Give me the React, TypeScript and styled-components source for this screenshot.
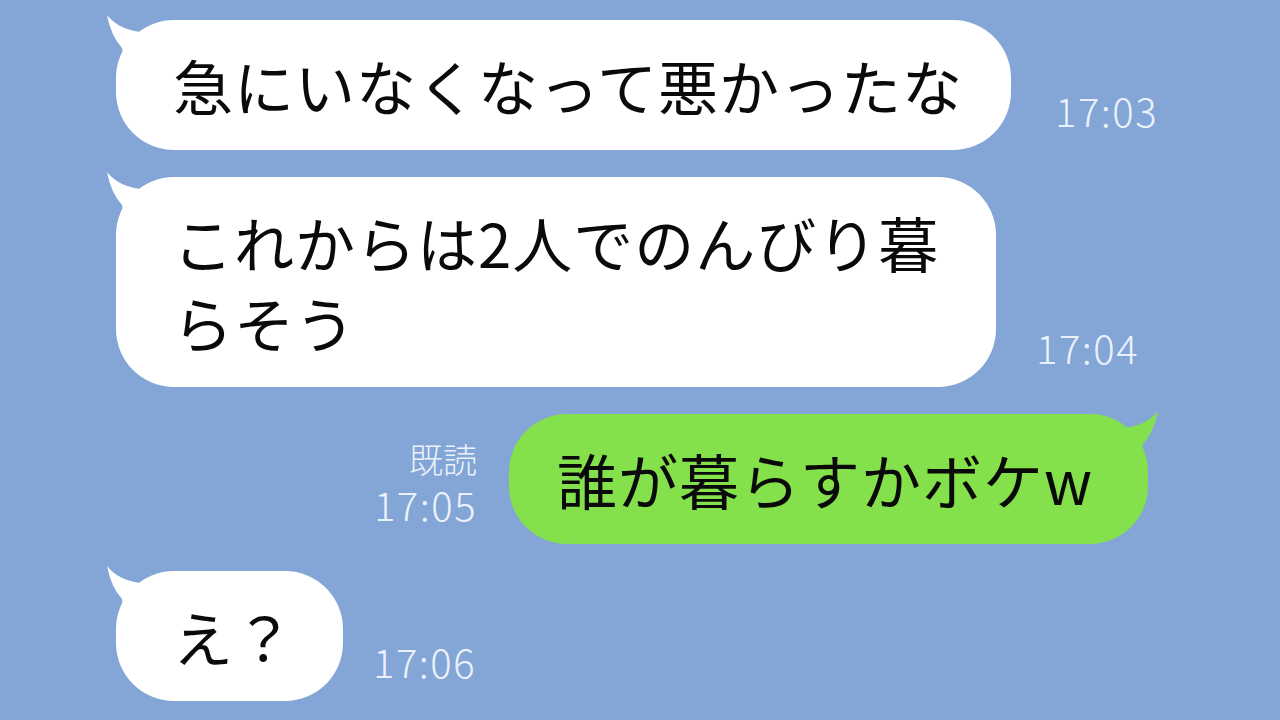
import React from "react";
import styled, { createGlobalStyle } from "styled-components";

const GlobalStyle = createGlobalStyle`
  html, body {
    margin: 0;
    padding: 0;
    background: #83a6d7;
    overflow: hidden;
  }
  body {
    font-family: "Noto Sans CJK JP", "Noto Sans", sans-serif;
  }
`;

const Screen = styled.div`
  width: 1280px;
  height: 720px;
  box-sizing: border-box;
  background: #83a6d7;
  padding: 20px 132px 0 116px;
  display: flex;
  flex-direction: column;
  gap: 27px;
  overflow: hidden;
`;

const Row = styled.div<{ $out?: boolean; $gap: number }>`
  display: flex;
  align-items: flex-end;
  justify-content: ${(p) => (p.$out ? "flex-end" : "flex-start")};
  gap: ${(p) => p.$gap}px;
`;

const Bubble = styled.div<{ $out?: boolean; $maxWidth?: number }>`
  position: relative;
  flex-shrink: 0;
  box-sizing: border-box;
  background: ${(p) => (p.$out ? "#84e04b" : "#ffffff")};
  color: #0a0a0a;
  font-size: 60px;
  line-height: 80px;
  letter-spacing: 1px;
  padding: ${(p) => (p.$out ? "25px 55px 25px 48px" : "25px 48px 25px 57px")};
  border-radius: 58px;
  max-width: ${(p) => (p.$maxWidth ? `${p.$maxWidth}px` : "none")};
  white-space: pre-wrap;
`;

const Tail = styled.svg<{ $out?: boolean }>`
  position: absolute;
  top: -8px;
  width: 60px;
  height: 60px;
  ${(p) =>
    p.$out
      ? "right: -13px; top: -6px; transform: scaleX(-1);"
      : "left: -12px;"}
`;

const Meta = styled.div<{ $out?: boolean }>`
  display: flex;
  flex-shrink: 0;
  flex-direction: column;
  align-items: ${(p) => (p.$out ? "flex-end" : "flex-start")};
  margin-bottom: 17px;
  color: rgba(250, 252, 255, 0.9);
  font-family: "Noto Sans CJK JP", sans-serif;
  font-weight: 300;
`;

const Read = styled.span`
  font-size: 34px;
  line-height: 44px;
`;

const Time = styled.span`
  font-size: 40px;
  line-height: 46px;
  letter-spacing: 1.5px;
`;

function BubbleTail({ out, color }: { out?: boolean; color: string }) {
  return (
    <Tail $out={out} viewBox="0 0 60 60">
      <path
        d="M3 3 Q14 17 36 20 L58 28 L58 58 L22 58 L18 36 Q7 24 3 3 Z"
        fill={color}
      />
    </Tail>
  );
}

type Msg = {
  out?: boolean;
  text: string;
  time: string;
  read?: boolean;
  maxWidth?: number;
  gap: number;
};

const messages: Msg[] = [
  { text: "急にいなくなって悪かったな", time: "17:03", gap: 44 },
  {
    text: "これからは2人でのんびり暮らそう",
    time: "17:04",
    maxWidth: 880,
    gap: 40,
  },
  { out: true, text: "誰が暮らすかボケw", time: "17:05", read: true, gap: 32 },
  { text: "え？", time: "17:06", gap: 30 },
];

export default function App() {
  return (
    <>
      <GlobalStyle />
      <Screen>
        {messages.map((m, i) =>
          m.out ? (
            <Row key={i} $out $gap={m.gap}>
              <Meta $out>
                {m.read && <Read>既読</Read>}
                <Time>{m.time}</Time>
              </Meta>
              <Bubble $out>
                <BubbleTail out color="#84e04b" />
                {m.text}
              </Bubble>
            </Row>
          ) : (
            <Row key={i} $gap={m.gap}>
              <Bubble $maxWidth={m.maxWidth}>
                <BubbleTail color="#ffffff" />
                {m.text}
              </Bubble>
              <Meta>
                <Time>{m.time}</Time>
              </Meta>
            </Row>
          )
        )}
      </Screen>
    </>
  );
}
